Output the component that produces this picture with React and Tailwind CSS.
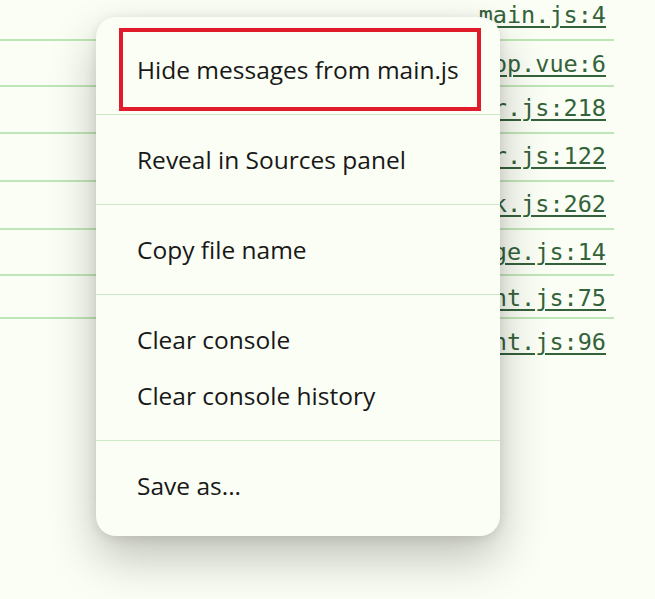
import React from "react";

const rows = [
  { file: "main.js:4", cls: "h-[41px] pt-px border-b-2" },
  { file: "App.vue:6", cls: "h-[46px] pt-[9px] border-b-2" },
  { file: "router.js:218", cls: "h-[47px] pt-[7px] border-b-2" },
  { file: "router.js:122", cls: "h-[48px] pt-[8px] border-b-2" },
  { file: "webpack.js:262", cls: "h-[48px] pt-[8px] border-b-2" },
  { file: "message.js:14", cls: "h-[46px] pt-[8px] border-b-2" },
  { file: "client.js:75", cls: "h-[43px] pt-[8px] border-b-2" },
  { file: "client.js:96", cls: "h-[46px] pt-[9px]" },
];

const groups = [
  ["Hide messages from main.js"],
  ["Reveal in Sources panel"],
  ["Copy file name"],
  ["Clear console", "Clear console history"],
  ["Save as..."],
];

function ConsoleRow({ file, cls }) {
  return (
    <div className={"flex justify-end border-[#bfe6b6] pr-[8px] " + cls}>
      <a
        href="#"
        className="text-[23.5px] leading-[28px] text-[#34623a] underline decoration-2 underline-offset-[3px]"
        style={{ fontFamily: '"DejaVu Sans Mono", monospace' }}
      >
        {file}
      </a>
    </div>
  );
}

function ContextMenu() {
  return (
    <div
      className="absolute left-[96px] top-[17px] w-[404px] rounded-[20px] bg-[#fbfef4] pt-[8px] pb-[6px] shadow-[0_22px_48px_rgba(0,0,0,0.24),0_2px_12px_rgba(0,0,0,0.1)]"
      style={{ fontFamily: '"Open Sans", "Noto Sans", sans-serif' }}
    >
      {groups.map((items, gi) => (
        <div
          key={gi}
          className={
            "pt-[17px] pb-[16px] " +
            (gi < groups.length - 1 ? "border-b border-[#cdeac6]" : "")
          }
        >
          {items.map((label) => (
            <div
              key={label}
              className="flex h-[56px] items-center pl-[41px] text-[24.5px] text-[#181818]"
            >
              {label}
            </div>
          ))}
        </div>
      ))}
      <div className="pointer-events-none absolute left-[23px] top-[11px] h-[83px] w-[362px] border-[4px] border-[#e01b2b]" />
    </div>
  );
}

export default function App() {
  return (
    <div className="relative h-[599px] w-[655px] overflow-hidden bg-[#fbfef4]">
      <div className="w-[614px]">
        {rows.map((r) => (
          <ConsoleRow key={r.file} file={r.file} cls={r.cls} />
        ))}
      </div>
      <ContextMenu />
    </div>
  );
}
